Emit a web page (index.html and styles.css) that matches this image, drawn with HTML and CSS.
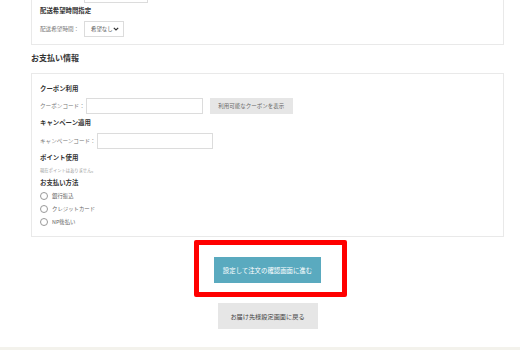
FILE: index.html
```html
<!DOCTYPE html>
<html>
<head>
    <title>お支払い情報</title>
    <meta name="viewport" content="width=device-width, initial-scale=1">
    <link rel="stylesheet" href="styles.css">
</head>
<body>
    <div class="container">
        <!-- Delivery -->
        <div class="card card-delivery">
            <div class="field">
                <span class="field-label field-label-wide"></span>
                <span class="input input-top"></span>
            </div>
            <h3>配送希望時間指定</h3>
            <div class="field">
                <span class="field-label">配送希望時間：</span>
                <span class="select">
                    希望なし
                    <svg class="chevron" width="6" height="4" viewBox="0 0 6 4">
                        <path d="M0.8 0.8 L3 3 L5.2 0.8" fill="none" stroke="#333" stroke-width="1.2"/>
                    </svg>
                </span>
            </div>
        </div>

        <h2>お支払い情報</h2>

        <!-- Payment -->
        <div class="card card-payment">
            <h3>クーポン利用</h3>
            <div class="field">
                <span class="field-label">クーポンコード：</span>
                <span class="input input-coupon"></span>
                <button class="small-button">利用可能なクーポンを表示</button>
            </div>

            <h3>キャンペーン適用</h3>
            <div class="field field-campaign">
                <span class="field-label">キャンペーンコード：</span>
                <span class="input input-campaign"></span>
            </div>

            <h3>ポイント使用</h3>
            <p class="note">現在ポイントはありません。</p>

            <h3>お支払い方法</h3>
            <div class="radio-list">
                <label class="radio"><span class="radio-dot"></span>銀行振込</label>
                <label class="radio"><span class="radio-dot"></span>クレジットカード</label>
                <label class="radio"><span class="radio-dot"></span>NP後払い</label>
            </div>
        </div>

        <div class="actions">
            <div class="primary-wrap">
                <button class="primary-button">設定して注文の確認画面に進む</button>
                <div class="highlight"></div>
            </div>
            <button class="secondary-button">お届け先様設定画面に戻る</button>
        </div>
    </div>
    <div class="footer"></div>
</body>
</html>
```

FILE: styles.css
```css
body {
    font-family: "Noto Sans CJK JP", "Noto Sans", sans-serif;
    margin: 0;
    background: #fff;
    color: #333;
}
.container {
    width: 473px;
    margin: -24px 0 0 31px;
}
.card {
    border: 1px solid #e9e9e9;
    background: #fff;
    padding: 0 8px;
}
.card-delivery {
    padding-top: 10px;
    padding-bottom: 7px;
}
.card-payment {
    padding-top: 10px;
    padding-bottom: 8px;
}
h2 {
    margin: 7px 0 9px 0;
    font-size: 8px;
    line-height: 12px;
    font-weight: bold;
    color: #333;
}
h3 {
    margin: 4px 0 0 0;
    font-size: 6.4px;
    line-height: 10px;
    font-weight: bold;
    color: #333;
}
.card-delivery h3 {
    margin-top: 3px;
}
.card-payment h3:first-child {
    margin-top: 0;
}
.field {
    display: flex;
    align-items: center;
    margin-top: 4px;
    height: 16px;
}
.card-delivery .field:first-child {
    margin-top: 0;
}
.card-delivery h3 + .field {
    margin-top: 5px;
}
.field-campaign {
    margin-top: 5px;
}
.field-label {
    font-size: 5.6px;
    color: #777;
    white-space: nowrap;
}
.field-label-wide {
    width: 49px;
}
.card-delivery .field-label {
    width: 44px;
}
.input {
    display: block;
    box-sizing: border-box;
    height: 16px;
    border: 1px solid #dcdcdc;
    background: #fff;
}
.input-top {
    width: 64px;
}
.input-coupon {
    width: 117px;
    margin-left: 1px;
}
.input-campaign {
    width: 116px;
    margin-left: 1px;
}
.select {
    display: flex;
    align-items: center;
    justify-content: space-between;
    box-sizing: border-box;
    width: 40px;
    height: 16px;
    padding: 0 4px 0 6px;
    border: 1px solid #dcdcdc;
    font-size: 5.4px;
    color: #555;
}
.small-button {
    margin-left: 7px;
    width: 83px;
    height: 16px;
    border: none;
    background: #e6e6e6;
    font-family: inherit;
    font-size: 5.5px;
    color: #666;
    padding: 0;
}
.note {
    margin: 3px 0 0 0;
    font-size: 4.3px;
    line-height: 8px;
    color: #999;
}
.radio-list {
    margin-top: 1px;
}
.radio {
    display: flex;
    align-items: center;
    height: 13px;
    font-size: 5.4px;
    color: #666;
}
.radio-dot {
    box-sizing: border-box;
    width: 8px;
    height: 8px;
    margin-right: 4px;
    border: 1px solid #999;
    border-radius: 50%;
    background: #fff;
}
.actions {
    display: flex;
    flex-direction: column;
    align-items: center;
    padding-top: 20px;
}
.primary-wrap {
    position: relative;
}
.primary-button {
    display: block;
    width: 107px;
    height: 26px;
    border: none;
    background: #5aaabf;
    color: #fff;
    font-family: inherit;
    font-size: 6.4px;
    padding: 0;
}
.highlight {
    position: absolute;
    left: -20px;
    top: -17px;
    width: 153px;
    height: 57px;
    box-sizing: border-box;
    border: 5px solid #f00;
    border-radius: 2px;
}
.secondary-button {
    display: block;
    margin-top: 20px;
    width: 100px;
    height: 26px;
    border: none;
    background: #e6e6e6;
    color: #444;
    font-family: inherit;
    font-size: 6.2px;
    padding: 0;
}
.footer {
    margin-top: 18px;
    height: 4px;
    background: #f3f2ec;
}
```
